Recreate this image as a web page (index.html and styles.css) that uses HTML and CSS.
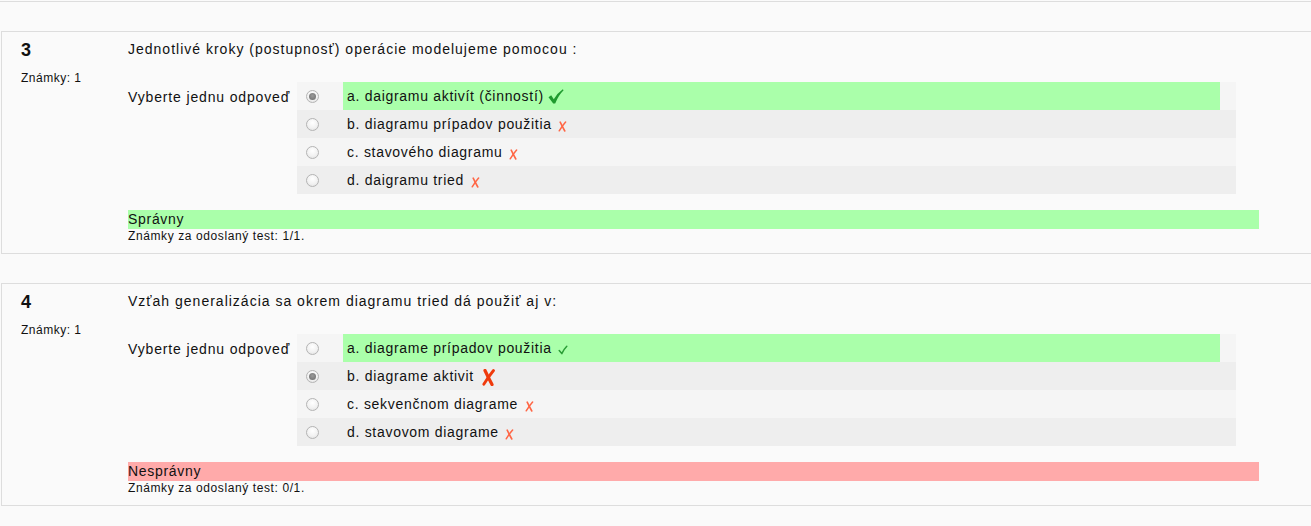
FILE: index.html
```html
<!DOCTYPE html>
<html lang="sk">
<head>
<meta charset="utf-8">
<title>Quiz review</title>
<link rel="stylesheet" href="styles.css">
</head>
<body>
<div class="page">
  <div class="prev"></div>

  <div class="que">
    <div class="info">
      <h3 class="no">3</h3>
      <div class="grade">Známky: 1</div>
    </div>
    <div class="content">
      <div class="qtext">Jednotlivé kroky (postupnosť) operácie modelujeme pomocou :</div>
      <div class="ablock">
        <div class="prompt">Vyberte jednu odpoveď</div>
        <div class="answer">
          <div class="opt r0">
            <span class="radio checked"></span>
            <span class="lbl correct">a. daigramu aktivít (činností) <svg class="ico big-check" width="16" height="15" viewBox="0 0 16 15"><path d="M0.5 8.2 L3.2 6.3 L5.8 10.2 Q9.5 4 14.8 0.3 L15.6 1.3 Q10.6 6.2 7.2 14.4 L5.2 14.4 Z" fill="#1f9a2f"/></svg></span>
          </div>
          <div class="opt r1">
            <span class="radio"></span>
            <span class="lbl">b. diagramu prípadov použitia <svg class="ico small-x" width="9" height="11" viewBox="0 0 9 11"><path d="M2.2 1.2 Q4 5 6.8 10" stroke="#ff6645" stroke-width="1.6" fill="none" stroke-linecap="round"/><path d="M7.6 1 Q4.5 4.5 1.2 9.8" stroke="#ff6645" stroke-width="1.5" fill="none" stroke-linecap="round"/></svg></span>
          </div>
          <div class="opt r0">
            <span class="radio"></span>
            <span class="lbl">c. stavového diagramu <svg class="ico small-x" width="9" height="11" viewBox="0 0 9 11"><path d="M2.2 1.2 Q4 5 6.8 10" stroke="#ff6645" stroke-width="1.6" fill="none" stroke-linecap="round"/><path d="M7.6 1 Q4.5 4.5 1.2 9.8" stroke="#ff6645" stroke-width="1.5" fill="none" stroke-linecap="round"/></svg></span>
          </div>
          <div class="opt r1">
            <span class="radio"></span>
            <span class="lbl">d. daigramu tried <svg class="ico small-x" width="9" height="11" viewBox="0 0 9 11"><path d="M2.2 1.2 Q4 5 6.8 10" stroke="#ff6645" stroke-width="1.6" fill="none" stroke-linecap="round"/><path d="M7.6 1 Q4.5 4.5 1.2 9.8" stroke="#ff6645" stroke-width="1.5" fill="none" stroke-linecap="round"/></svg></span>
          </div>
        </div>
      </div>
      <div class="state ok">Správny</div>
      <div class="details">Známky za odoslaný test: 1/1.</div>
    </div>
  </div>

  <div class="que">
    <div class="info">
      <h3 class="no">4</h3>
      <div class="grade">Známky: 1</div>
    </div>
    <div class="content">
      <div class="qtext">Vzťah generalizácia sa okrem diagramu tried dá použiť aj v:</div>
      <div class="ablock">
        <div class="prompt">Vyberte jednu odpoveď</div>
        <div class="answer">
          <div class="opt r0">
            <span class="radio"></span>
            <span class="lbl correct">a. diagrame prípadov použitia <svg class="ico small-check" width="10" height="10" viewBox="0 0 10 10"><path d="M1.2 5.6 L3.8 8.6 Q5.8 4.2 8.8 1.2" stroke="#2a9d36" stroke-width="1.5" fill="none" stroke-linecap="round" stroke-linejoin="round"/></svg></span>
          </div>
          <div class="opt r1">
            <span class="radio checked"></span>
            <span class="lbl">b. diagrame aktivit <svg class="ico big-x" width="13" height="17" viewBox="0 0 13 17"><path d="M3 1.5 Q6 8 10 15.5" stroke="#ef3a0c" stroke-width="3.2" fill="none" stroke-linecap="round"/><path d="M11.5 1.5 Q7 7 1.8 15.2" stroke="#ef3a0c" stroke-width="2.8" fill="none" stroke-linecap="round"/></svg></span>
          </div>
          <div class="opt r0">
            <span class="radio"></span>
            <span class="lbl">c. sekvenčnom diagrame <svg class="ico small-x" width="9" height="11" viewBox="0 0 9 11"><path d="M2.2 1.2 Q4 5 6.8 10" stroke="#ff6645" stroke-width="1.6" fill="none" stroke-linecap="round"/><path d="M7.6 1 Q4.5 4.5 1.2 9.8" stroke="#ff6645" stroke-width="1.5" fill="none" stroke-linecap="round"/></svg></span>
          </div>
          <div class="opt r1">
            <span class="radio"></span>
            <span class="lbl">d. stavovom diagrame <svg class="ico small-x" width="9" height="11" viewBox="0 0 9 11"><path d="M2.2 1.2 Q4 5 6.8 10" stroke="#ff6645" stroke-width="1.6" fill="none" stroke-linecap="round"/><path d="M7.6 1 Q4.5 4.5 1.2 9.8" stroke="#ff6645" stroke-width="1.5" fill="none" stroke-linecap="round"/></svg></span>
          </div>
        </div>
      </div>
      <div class="state bad">Nesprávny</div>
      <div class="details">Známky za odoslaný test: 0/1.</div>
    </div>
  </div>
</div>
</body>
</html>
```

FILE: styles.css
```css
html, body {
  margin: 0;
  padding: 0;
  background: #fafafa;
  overflow: hidden;
}
body {
  font-family: "Liberation Sans", Arial, sans-serif;
  font-size: 14px;
  letter-spacing: 0.7px;
  color: #111;
}
.page {
  display: flex;
  flex-direction: column;
  gap: 29px;
  width: 1400px;
}
.prev {
  height: 1px;
  border-bottom: 1px solid #dddddd;
}
.que {
  display: flex;
  margin-left: 1px;
  border: 1px solid #dddddd;
  background: #fafafa;
}
.info {
  width: 107px;
  padding: 8px 0 0 19px;
  flex: none;
}
.no {
  margin: 0;
  font-size: 18px;
  line-height: 20px;
  font-weight: bold;
  letter-spacing: 0;
}
.grade {
  margin-top: 11px;
  font-size: 12px;
  line-height: 14px;
  letter-spacing: 0.5px;
}
.content {
  width: 1131px;
  padding: 9px 0 9px 0;
}
.qtext {
  line-height: 16px;
  letter-spacing: 1px;
}
.ablock {
  display: flex;
  margin-top: 25px;
}
.prompt {
  width: 169px;
  flex: none;
  padding-top: 7px;
  line-height: 16px;
  letter-spacing: 0.85px;
}
.answer {
  width: 939px;
  display: flex;
  flex-direction: column;
}
.opt {
  display: flex;
  align-items: stretch;
  height: 28px;
  padding-right: 16px;
}
.opt.r0 { background: #f5f5f5; }
.opt.r1 { background: #eeeeee; }
.radio {
  flex: none;
  width: 11px;
  height: 11px;
  margin: 8px 24px 0 9px;
  border: 1px solid #b4b4b4;
  border-radius: 50%;
  background: radial-gradient(circle at 50% 35%, #ffffff 0%, #f2f2f2 55%, #dedede 100%);
  position: relative;
}
.radio.checked::after {
  content: "";
  position: absolute;
  left: 2px;
  top: 2px;
  width: 7px;
  height: 7px;
  border-radius: 50%;
  background: radial-gradient(circle at 50% 40%, #9a9a9a 0%, #7e7e7e 60%, #6f6f6f 100%);
}
.lbl {
  flex: 1;
  padding: 6px 4px;
  line-height: 16px;
  white-space: nowrap;
}
.lbl.correct {
  background: #aaffaa;
}
.ico {
  display: inline-block;
  vertical-align: middle;
}
.big-check {
  margin-left: 0;
  vertical-align: -3px;
}
.small-x {
  margin-left: 2px;
  vertical-align: -3px;
}
.small-check {
  margin-left: 2px;
  vertical-align: -2px;
}
.big-x {
  margin-left: 3px;
  vertical-align: -5px;
}
.state {
  margin-top: 16px;
  height: 19px;
  line-height: 19px;
}
.state.ok { background: #aaffaa; }
.state.bad { background: #ffaaaa; }
.details {
  font-size: 12px;
  line-height: 15px;
  letter-spacing: 0.6px;
}
```
